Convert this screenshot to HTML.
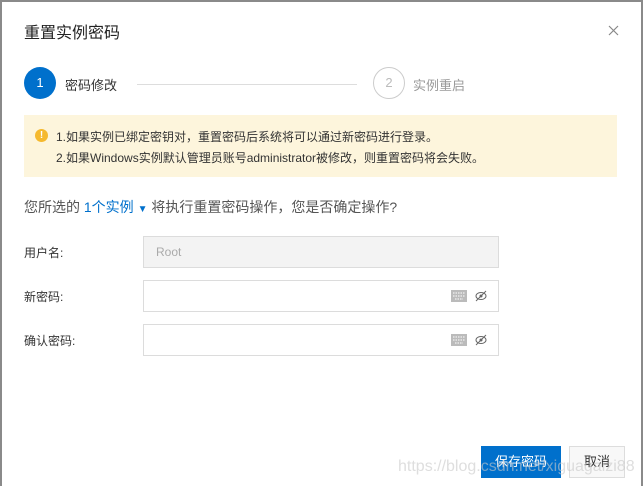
<!DOCTYPE html><html><head><meta charset="utf-8"><style>
*{margin:0;padding:0;box-sizing:border-box}
body{width:643px;height:486px;overflow:hidden;background:#fff;font-family:"Liberation Sans","Noto Sans CJK SC",sans-serif;position:relative;color:#333}
.a{position:absolute;white-space:nowrap}
.inp{position:absolute;left:143px;width:356px;height:32px;border:1px solid #dcdcdc;background:#fff}
.lbl{position:absolute;left:24px;font-size:12px;color:#333}
</style></head><body>
<div class="a" style="left:0;top:0;width:643px;height:2px;background:#8a8a8a"></div>
<div class="a" style="left:0;top:0;width:2px;height:486px;background:#8a8a8a"></div>
<div class="a" style="left:641px;top:0;width:2px;height:486px;background:#8a8a8a"></div>
<div class="a" style="left:24px;top:19px;font-size:16px;color:#222">重置实例密码</div>
<svg class="a" style="left:608px;top:25px" width="11" height="11"><path d="M1 1L10 10M10 1L1 10" stroke="#888" stroke-width="1.2"/></svg>
<div class="a" style="left:24px;top:67px;width:32px;height:32px;border-radius:50%;background:#0070cc;color:#fff;font-size:13px;text-align:center;line-height:32px">1</div>
<div class="a" style="left:65px;top:75px;font-size:13px;color:#333">密码修改</div>
<div class="a" style="left:137px;top:84px;width:220px;height:1px;background:#ddd"></div>
<div class="a" style="left:373px;top:67px;width:32px;height:32px;border-radius:50%;border:1px solid #ccc;color:#bbb;font-size:13px;text-align:center;line-height:30px">2</div>
<div class="a" style="left:413px;top:75px;font-size:13px;color:#999">实例重启</div>
<div class="a" style="left:24px;top:115px;width:593px;height:62px;background:#fdf5dc"></div>
<div class="a" style="left:35px;top:129px;width:13px;height:13px;border-radius:50%;background:#f5b92e;color:#fff;font-size:10px;font-weight:bold;text-align:center;line-height:13px">!</div>
<div class="a" style="left:56px;top:128px;font-size:12px;color:#333">1.如果实例已绑定密钥对，重置密码后系统将可以通过新密码进行登录。</div>
<div class="a" style="left:56px;top:149px;font-size:12px;color:#333">2.如果Windows实例默认管理员账号administrator被修改，则重置密码将会失败。</div>
<div class="a" style="left:24px;top:197px;font-size:14px;color:#555">您所选的 <span style="color:#0070cc">1个实例 <span style="font-size:10px">▼</span></span> 将执行重置密码操作，您是否确定操作?</div>
<div class="lbl" style="top:244px">用户名:</div>
<div class="lbl" style="top:288px">新密码:</div>
<div class="lbl" style="top:332px">确认密码:</div>
<div class="inp" style="top:236px;background:#f3f3f3;color:#aaa;font-size:12px;padding:8px 12px">Root</div>
<div class="inp" style="top:280px"></div>
<div class="inp" style="top:324px"></div>
<svg class="a" style="left:451px;top:290px" width="40" height="12"><rect x="0" y="0" width="16" height="12" fill="#bbb"/><path d="M2 3h12M2 6h12M4 9h8" stroke="#fff" stroke-width="1" stroke-dasharray="1.5 1"/><ellipse cx="30" cy="6" rx="5" ry="3.5" fill="none" stroke="#666"/><circle cx="30" cy="6" r="1.5" fill="#666"/><path d="M25 11L35 1" stroke="#666"/></svg>
<svg class="a" style="left:451px;top:334px" width="40" height="12"><rect x="0" y="0" width="16" height="12" fill="#bbb"/><path d="M2 3h12M2 6h12M4 9h8" stroke="#fff" stroke-width="1" stroke-dasharray="1.5 1"/><ellipse cx="30" cy="6" rx="5" ry="3.5" fill="none" stroke="#666"/><circle cx="30" cy="6" r="1.5" fill="#666"/><path d="M25 11L35 1" stroke="#666"/></svg>
<div class="a" style="left:481px;top:446px;width:80px;height:32px;background:#0070cc;color:#fff;font-size:13px;text-align:center;line-height:32px">保存密码</div>
<div class="a" style="left:569px;top:446px;width:56px;height:32px;border:1px solid #ddd;background:#f8f8f8;color:#333;font-size:13px;text-align:center;line-height:30px">取消</div>
<div class="a" style="left:398px;top:458px;font-size:16px;color:rgba(200,200,200,0.6)">https://blog.csdn.net/xiguagaizi88</div>
</body></html>
